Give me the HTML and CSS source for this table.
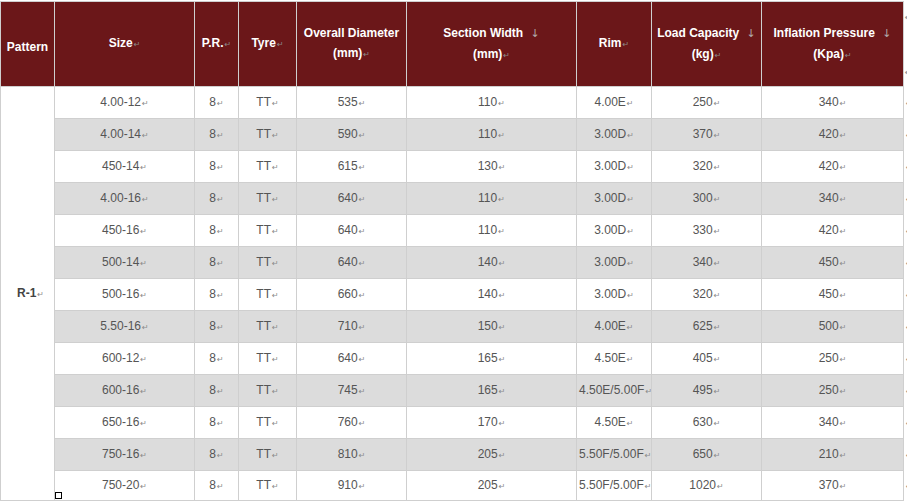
FILE: index.html
```html
<!DOCTYPE html>
<html>
<head>
<meta charset="utf-8">
<link rel="stylesheet" href="styles.css">
</head>
<body>
<div class="wrap">
<table class="spec">
<colgroup>
<col class="c-pat"><col class="c-size"><col class="c-pr"><col class="c-tyre"><col class="c-od"><col class="c-sw"><col class="c-rim"><col class="c-lc"><col class="c-ip"><col class="c-eol">
</colgroup>
<thead>
<tr>
<th>Pattern</th>
<th>Size<span class="pm">↵</span></th>
<th>P.R.<span class="pm">↵</span></th>
<th>Tyre<span class="pm">↵</span></th>
<th>Overall Diameter<br>(mm)<span class="pm">↵</span></th>
<th>Section Width <span class="arr">↓</span><br>(mm)<span class="pm">↵</span></th>
<th>Rim<span class="pm">↵</span></th>
<th>Load Capacity <span class="arr">↓</span><br>(kg)<span class="pm">↵</span></th>
<th>Inflation Pressure <span class="arr">↓</span><br>(Kpa)<span class="pm">↵</span></th>
<td class="eol eol-h"><span class="pm pm-a">↵</span><span class="pm pm-b">↵</span></td>
</tr>
</thead>
<tbody>
<tr><td class="pat" rowspan="13">R-1<span class="pm">↵</span></td><td>4.00-12<span class="pm">↵</span></td><td>8<span class="pm">↵</span></td><td>TT<span class="pm">↵</span></td><td>535<span class="pm">↵</span></td><td>110<span class="pm">↵</span></td><td>4.00E<span class="pm">↵</span></td><td>250<span class="pm">↵</span></td><td>340<span class="pm">↵</span></td><td class="eol"><span class="pm">↵</span></td></tr>
<tr class="alt"><td>4.00-14<span class="pm">↵</span></td><td>8<span class="pm">↵</span></td><td>TT<span class="pm">↵</span></td><td>590<span class="pm">↵</span></td><td>110<span class="pm">↵</span></td><td>3.00D<span class="pm">↵</span></td><td>370<span class="pm">↵</span></td><td>420<span class="pm">↵</span></td><td class="eol"><span class="pm">↵</span></td></tr>
<tr><td>450-14<span class="pm">↵</span></td><td>8<span class="pm">↵</span></td><td>TT<span class="pm">↵</span></td><td>615<span class="pm">↵</span></td><td>130<span class="pm">↵</span></td><td>3.00D<span class="pm">↵</span></td><td>320<span class="pm">↵</span></td><td>420<span class="pm">↵</span></td><td class="eol"><span class="pm">↵</span></td></tr>
<tr class="alt"><td>4.00-16<span class="pm">↵</span></td><td>8<span class="pm">↵</span></td><td>TT<span class="pm">↵</span></td><td>640<span class="pm">↵</span></td><td>110<span class="pm">↵</span></td><td>3.00D<span class="pm">↵</span></td><td>300<span class="pm">↵</span></td><td>340<span class="pm">↵</span></td><td class="eol"><span class="pm">↵</span></td></tr>
<tr><td>450-16<span class="pm">↵</span></td><td>8<span class="pm">↵</span></td><td>TT<span class="pm">↵</span></td><td>640<span class="pm">↵</span></td><td>110<span class="pm">↵</span></td><td>3.00D<span class="pm">↵</span></td><td>330<span class="pm">↵</span></td><td>420<span class="pm">↵</span></td><td class="eol"><span class="pm">↵</span></td></tr>
<tr class="alt"><td>500-14<span class="pm">↵</span></td><td>8<span class="pm">↵</span></td><td>TT<span class="pm">↵</span></td><td>640<span class="pm">↵</span></td><td>140<span class="pm">↵</span></td><td>3.00D<span class="pm">↵</span></td><td>340<span class="pm">↵</span></td><td>450<span class="pm">↵</span></td><td class="eol"><span class="pm">↵</span></td></tr>
<tr><td>500-16<span class="pm">↵</span></td><td>8<span class="pm">↵</span></td><td>TT<span class="pm">↵</span></td><td>660<span class="pm">↵</span></td><td>140<span class="pm">↵</span></td><td>3.00D<span class="pm">↵</span></td><td>320<span class="pm">↵</span></td><td>450<span class="pm">↵</span></td><td class="eol"><span class="pm">↵</span></td></tr>
<tr class="alt"><td>5.50-16<span class="pm">↵</span></td><td>8<span class="pm">↵</span></td><td>TT<span class="pm">↵</span></td><td>710<span class="pm">↵</span></td><td>150<span class="pm">↵</span></td><td>4.00E<span class="pm">↵</span></td><td>625<span class="pm">↵</span></td><td>500<span class="pm">↵</span></td><td class="eol"><span class="pm">↵</span></td></tr>
<tr><td>600-12<span class="pm">↵</span></td><td>8<span class="pm">↵</span></td><td>TT<span class="pm">↵</span></td><td>640<span class="pm">↵</span></td><td>165<span class="pm">↵</span></td><td>4.50E<span class="pm">↵</span></td><td>405<span class="pm">↵</span></td><td>250<span class="pm">↵</span></td><td class="eol"><span class="pm">↵</span></td></tr>
<tr class="alt"><td>600-16<span class="pm">↵</span></td><td>8<span class="pm">↵</span></td><td>TT<span class="pm">↵</span></td><td>745<span class="pm">↵</span></td><td>165<span class="pm">↵</span></td><td class="tight">4.50E/5.00F<span class="pm">↵</span></td><td>495<span class="pm">↵</span></td><td>250<span class="pm">↵</span></td><td class="eol"><span class="pm">↵</span></td></tr>
<tr><td>650-16<span class="pm">↵</span></td><td>8<span class="pm">↵</span></td><td>TT<span class="pm">↵</span></td><td>760<span class="pm">↵</span></td><td>170<span class="pm">↵</span></td><td>4.50E<span class="pm">↵</span></td><td>630<span class="pm">↵</span></td><td>340<span class="pm">↵</span></td><td class="eol"><span class="pm">↵</span></td></tr>
<tr class="alt"><td>750-16<span class="pm">↵</span></td><td>8<span class="pm">↵</span></td><td>TT<span class="pm">↵</span></td><td>810<span class="pm">↵</span></td><td>205<span class="pm">↵</span></td><td class="tight">5.50F/5.00F<span class="pm">↵</span></td><td>650<span class="pm">↵</span></td><td>210<span class="pm">↵</span></td><td class="eol"><span class="pm">↵</span></td></tr>
<tr class="last"><td>750-20<span class="pm">↵</span></td><td>8<span class="pm">↵</span></td><td>TT<span class="pm">↵</span></td><td>910<span class="pm">↵</span></td><td>205<span class="pm">↵</span></td><td class="tight">5.50F/5.00F<span class="pm">↵</span></td><td>1020<span class="pm">↵</span></td><td>370<span class="pm">↵</span></td><td class="eol"><span class="pm">↵</span></td></tr>
</tbody>
</table>
<span class="handle"></span>
</div>
</body>
</html>
```

FILE: styles.css
```css
html, body {
  margin: 0;
  padding: 0;
  background: #fff;
  overflow: hidden;
}
body {
  padding-top: 1px;
  font-family: "Liberation Sans", Arial, sans-serif;
  font-size: 12px;
  color: #555;
}
.wrap {
  position: relative;
  width: 907px;
}
.spec {
  border-collapse: collapse;
  table-layout: fixed;
  width: 907px;
}
.c-pat { width: 54px; }
.c-size { width: 140px; }
.c-pr { width: 44px; }
.c-tyre { width: 58px; }
.c-od { width: 110px; }
.c-sw { width: 170px; }
.c-rim { width: 75px; }
.c-lc { width: 110px; }
.c-ip { width: 142px; }
.c-eol { width: 4px; }

.spec th,
.spec td {
  border: 1px solid #cfcfcf;
  text-align: center;
  vertical-align: middle;
  padding: 0;
  white-space: nowrap;
  overflow: hidden;
}
.spec th {
  background: #6b1719;
  color: #fff;
  font-weight: bold;
  height: 84px;
  line-height: 20px;
}
.spec th:first-child {
  padding-top: 6px;
  height: 78px;
}
.spec tbody td {
  height: 31px;
  line-height: 16px;
}
.spec tbody tr.last td {
  height: 29px;
}
.spec tr.alt td {
  background: #dcdcdc;
}
.spec td.pat {
  background: #fff;
  font-weight: bold;
  color: #444;
  padding-left: 6px;
}
.spec td.tight {
  text-align: left;
  padding-left: 2px;
}
.spec .eol {
  border: none;
  background: #fff !important;
  text-align: left;
  overflow: visible;
  padding-left: 1px;
}
.spec .eol-h {
  vertical-align: top;
  height: 84px;
}
.spec .eol-h .pm {
  display: block;
  height: 42px;
  margin-left: 0;
}
.spec .eol-h .pm-a {
  line-height: 32px;
}
.spec .eol-h .pm-b {
  line-height: 58px;
}
.pm {
  font-family: "DejaVu Sans", sans-serif;
  font-size: 8px;
  color: #8a8a8a;
  font-weight: normal;
  margin-left: 1px;
}
.arr {
  font-family: "DejaVu Sans", sans-serif;
  font-weight: normal;
  font-size: 11px;
  color: #b0a8a8;
  margin-left: 4px;
}
.handle {
  position: absolute;
  left: 55px;
  top: 491px;
  width: 5px;
  height: 5px;
  border: 1px solid #000;
  background: #fff;
}
```
